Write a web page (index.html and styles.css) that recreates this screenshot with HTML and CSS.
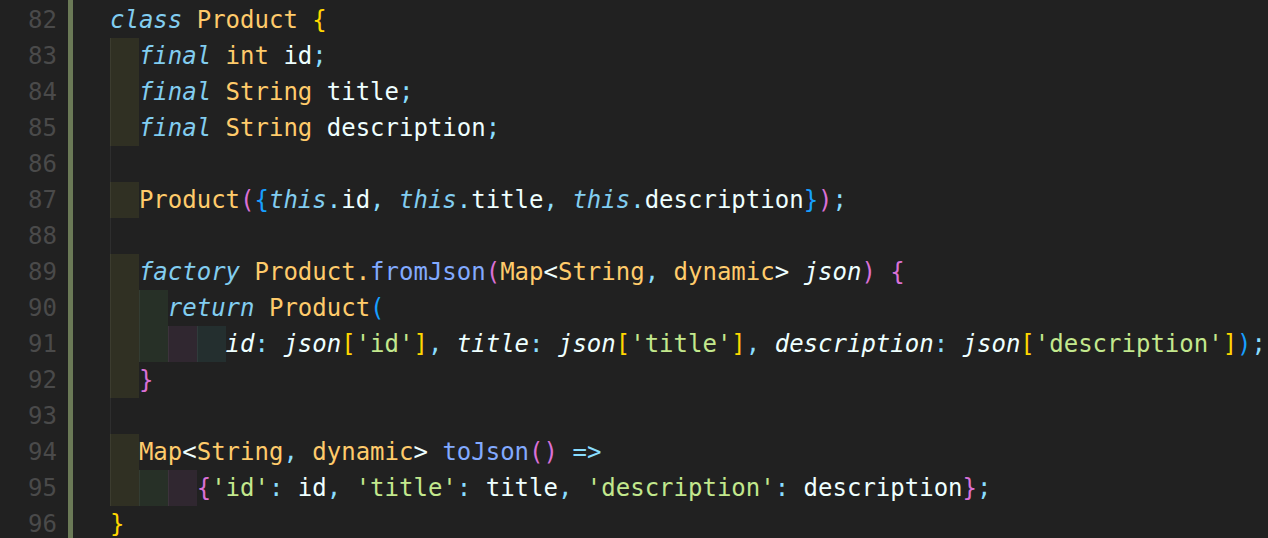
FILE: index.html
```html
<!DOCTYPE html>
<html>
<head>
<meta charset="utf-8">
<link rel="stylesheet" href="styles.css">
</head>
<body>
<div class="editor">
  <div class="gutter">
    <div class="ln">82</div>
    <div class="ln">83</div>
    <div class="ln">84</div>
    <div class="ln">85</div>
    <div class="ln">86</div>
    <div class="ln">87</div>
    <div class="ln">88</div>
    <div class="ln">89</div>
    <div class="ln">90</div>
    <div class="ln">91</div>
    <div class="ln">92</div>
    <div class="ln">93</div>
    <div class="ln">94</div>
    <div class="ln">95</div>
    <div class="ln">96</div>
  </div>
  <div class="bar"></div>
  <div class="code">
    <div class="line"><span class="t"><span class="kw">class</span> <span class="ty">Product</span> <span class="b1">{</span></span></div>
    <div class="line"><span class="ind l1"></span><span class="t"><span class="kw">final</span> <span class="ty">int</span> <span class="id">id</span><span class="p">;</span></span></div>
    <div class="line"><span class="ind l1"></span><span class="t"><span class="kw">final</span> <span class="ty">String</span> <span class="id">title</span><span class="p">;</span></span></div>
    <div class="line"><span class="ind l1"></span><span class="t"><span class="kw">final</span> <span class="ty">String</span> <span class="id">description</span><span class="p">;</span></span></div>
    <div class="line"><span class="ind l0"></span></div>
    <div class="line"><span class="ind l1"></span><span class="t"><span class="ty">Product</span><span class="b2">(</span><span class="b3">{</span><span class="kw">this</span><span class="p">.</span><span class="id">id</span><span class="p">,</span> <span class="kw">this</span><span class="p">.</span><span class="id">title</span><span class="p">,</span> <span class="kw">this</span><span class="p">.</span><span class="id">description</span><span class="b3">}</span><span class="b2">)</span><span class="p">;</span></span></div>
    <div class="line"><span class="ind l0"></span></div>
    <div class="line"><span class="ind l1"></span><span class="t"><span class="kw">factory</span> <span class="ty">Product.</span><span class="fn">fromJson</span><span class="b2">(</span><span class="ty">Map</span><span class="id">&lt;</span><span class="ty">String</span><span class="p">,</span> <span class="ty">dynamic</span><span class="id">&gt;</span> <span class="it">json</span><span class="b2">)</span> <span class="b2">{</span></span></div>
    <div class="line"><span class="ind l1"></span><span class="ind l2"></span><span class="t"><span class="kw">return</span> <span class="ty">Product</span><span class="b3">(</span></span></div>
    <div class="line"><span class="ind l1"></span><span class="ind l2"></span><span class="ind l3"></span><span class="ind l4"></span><span class="t"><span class="it">id</span><span class="p">:</span> <span class="it">json</span><span class="b1">[</span><span class="st">'id'</span><span class="b1">]</span><span class="p">,</span> <span class="it">title</span><span class="p">:</span> <span class="it">json</span><span class="b1">[</span><span class="st">'title'</span><span class="b1">]</span><span class="p">,</span> <span class="it">description</span><span class="p">:</span> <span class="it">json</span><span class="b1">[</span><span class="st">'description'</span><span class="b1">]</span><span class="b3">)</span><span class="p">;</span></span></div>
    <div class="line"><span class="ind l1"></span><span class="t"><span class="b2">}</span></span></div>
    <div class="line"><span class="ind l0"></span></div>
    <div class="line"><span class="ind l1"></span><span class="t"><span class="ty">Map</span><span class="id">&lt;</span><span class="ty">String</span><span class="p">,</span> <span class="ty">dynamic</span><span class="id">&gt;</span> <span class="fn">toJson</span><span class="b2">()</span> <span class="p">=&gt;</span></span></div>
    <div class="line"><span class="ind l1"></span><span class="ind l2"></span><span class="ind l3"></span><span class="t"><span class="b2">{</span><span class="st">'id'</span><span class="p">:</span> <span class="id">id</span><span class="p">,</span> <span class="st">'title'</span><span class="p">:</span> <span class="id">title</span><span class="p">,</span> <span class="st">'description'</span><span class="p">:</span> <span class="id">description</span><span class="b2">}</span><span class="p">;</span></span></div>
    <div class="line"><span class="t"><span class="b1">}</span></span></div>
  </div>
</div>
</body>
</html>
```

FILE: styles.css
```css
html, body {
  margin: 0;
  padding: 0;
  background: #212121;
  height: 538px;
  overflow: hidden;
}

.editor {
  display: flex;
  padding-top: 2px;
  font-family: "DejaVu Sans Mono", "Liberation Mono", monospace;
  font-size: 24px;
  line-height: 36px;
  color: #eeffff;
}

.gutter {
  width: 57px;
  flex: none;
  text-align: right;
  color: #4a4a4a;
}

.ln {
  height: 36px;
}

.bar {
  flex: none;
  width: 5px;
  margin-left: 11px;
  margin-top: -2px;
  height: 540px;
  background: #6b7a57;
}

.code {
  flex: 1;
  margin-left: 37px;
  min-width: 0;
}

.line {
  display: flex;
  height: 36px;
  white-space: pre;
}

.t {
  white-space: pre;
}

.ind {
  flex: none;
  width: 2ch;
  height: 36px;
  box-sizing: border-box;
  border-left: 1px solid rgba(255, 255, 255, 0.06);
}

.l1 { background: rgba(255, 255, 64, 0.07); }
.l2 { background: rgba(127, 255, 127, 0.07); }
.l3 { background: rgba(255, 127, 255, 0.07); }
.l4 { background: rgba(79, 236, 236, 0.07); }

.kw { color: #82cdf0; font-style: italic; }
.ty { color: #ffcb6b; }
.id { color: #eeffff; }
.it { color: #eeffff; font-style: italic; }
.p { color: #89ddff; }
.fn { color: #82aaff; }
.st { color: #c3e88d; }
.b1 { color: #ffd700; }
.b2 { color: #da70d6; }
.b3 { color: #179fff; }
```
